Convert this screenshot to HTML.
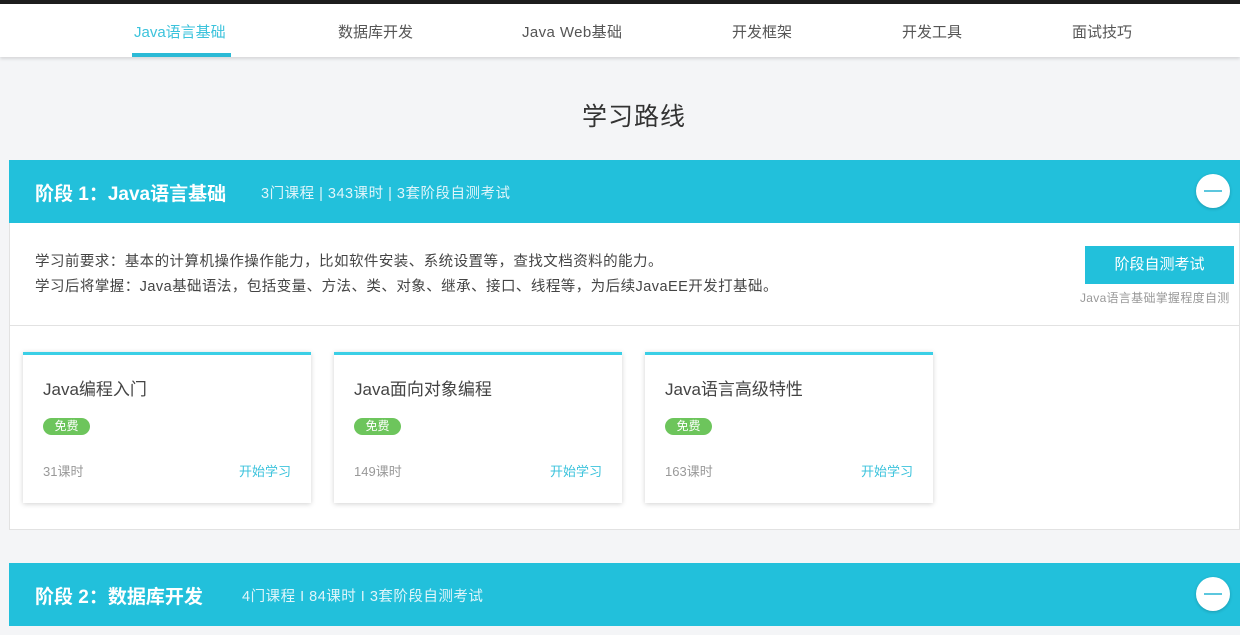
<!DOCTYPE html>
<html><head><meta charset="utf-8"><style>
*{margin:0;padding:0;box-sizing:border-box}
body{width:1240px;height:635px;overflow:hidden;background:#f4f5f7;font-family:"Liberation Sans","Noto Sans CJK SC",sans-serif;position:relative;color:#333}
.top{position:absolute;left:0;top:0;width:1240px;height:4px;background:#1d1d1d}
.nav{position:absolute;left:0;top:4px;width:1240px;height:53px;background:#fff;box-shadow:0 2px 3px rgba(0,0,0,.12)}
.nav span{position:absolute;top:17px;font-size:15px;color:#555;white-space:nowrap}
.nav .on{color:#3cc3dc}
.ul{position:absolute;left:132px;top:53px;width:99px;height:4px;background:#2bbad6}
h1{position:absolute;left:28px;width:1212px;top:97px;text-align:center;font-size:25px;font-weight:normal;color:#333;letter-spacing:1px}
.stage{position:absolute;left:9px;width:1231px;height:63px;background:#22c0db;color:#fff}
.stage b{position:absolute;left:26px;top:19px;font-size:19px}
.stage i{position:absolute;font-style:normal;top:22px;font-size:14.5px;color:#dff5fa;letter-spacing:.5px;white-space:nowrap}
.circ{position:absolute;left:1187px;top:14px;width:34px;height:34px;border-radius:50%;background:#fff;box-shadow:0 1px 3px rgba(0,0,0,.2)}
.circ:after{content:"";position:absolute;left:8px;top:16px;width:18px;height:2px;background:#5cc7de}
.box{position:absolute;left:9px;top:223px;width:1231px;height:307px;background:#fff;border:1px solid #e2e2e2;border-top:none}
.req{position:absolute;left:25px;font-size:14.5px;color:#444;letter-spacing:.45px;white-space:nowrap}
.btn{position:absolute;left:1075px;top:23px;width:149px;height:38px;background:#22c0db;color:#fff;font-size:15px;text-align:center;line-height:38px}
.sub{position:absolute;left:1070px;top:66px;font-size:12px;color:#999;letter-spacing:.3px}
.div{position:absolute;left:0;top:102px;width:1231px;height:1px;background:#e2e2e2}
.card{position:absolute;top:129px;width:288px;height:151px;background:#fff;border-top:3px solid #3bcfe6;box-shadow:0 1px 5px rgba(0,0,0,.18)}
.card .t{position:absolute;left:20px;top:20px;font-size:17px;color:#444}
.card .f{position:absolute;left:20px;top:63px;width:47px;height:17px;border-radius:9px;background:#6dc55c;color:#fff;font-size:12px;text-align:center;line-height:17px}
.card .h{position:absolute;left:20px;top:106px;font-size:13px;color:#999}
.card .s{position:absolute;right:20px;top:106px;font-size:13px;color:#3cc3dc}
</style></head><body>
<div class="top"></div>
<div class="nav">
<span class="on" style="left:134px">Java语言基础</span>
<span style="left:338px">数据库开发</span>
<span style="left:522px;letter-spacing:.4px">Java Web基础</span>
<span style="left:732px">开发框架</span>
<span style="left:902px">开发工具</span>
<span style="left:1072px">面试技巧</span>
</div>
<div class="ul"></div>
<h1>学习路线</h1>
<div class="stage" style="top:160px"><b>阶段 1：Java语言基础</b><i style="left:252px">3门课程 | 343课时 | 3套阶段自测考试</i><div class="circ"></div></div>
<div class="box">
<div class="req" style="top:27px">学习前要求：基本的计算机操作操作能力，比如软件安装、系统设置等，查找文档资料的能力。</div>
<div class="req" style="top:52px">学习后将掌握：Java基础语法，包括变量、方法、类、对象、继承、接口、线程等，为后续JavaEE开发打基础。</div>
<div class="btn">阶段自测考试</div>
<div class="sub">Java语言基础掌握程度自测</div>
<div class="div"></div>
<div class="card" style="left:13px"><div class="t">Java编程入门</div><div class="f">免费</div><div class="h">31课时</div><div class="s">开始学习</div></div>
<div class="card" style="left:324px"><div class="t">Java面向对象编程</div><div class="f">免费</div><div class="h">149课时</div><div class="s">开始学习</div></div>
<div class="card" style="left:635px"><div class="t">Java语言高级特性</div><div class="f">免费</div><div class="h">163课时</div><div class="s">开始学习</div></div>
</div>
<div class="stage" style="top:563px"><b>阶段 2：数据库开发</b><i style="left:233px">4门课程 I 84课时 I 3套阶段自测考试</i><div class="circ"></div></div>
</body></html>
